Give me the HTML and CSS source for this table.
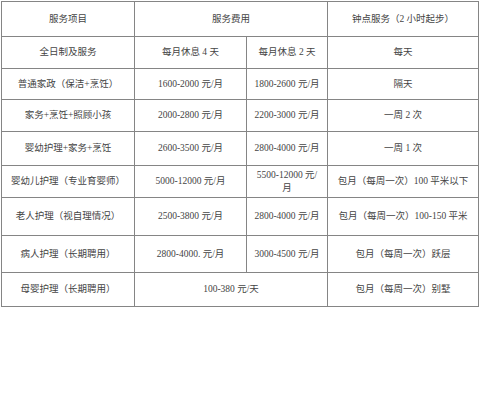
FILE: index.html
```html
<!DOCTYPE html>
<html lang="zh-CN">
<head>
<meta charset="utf-8">
<title>服务价格表</title>
<link rel="stylesheet" href="styles.css">
</head>
<body>
<table class="price-table">
  <colgroup>
    <col class="c1"><col class="c2"><col class="c3"><col class="c4">
  </colgroup>
  <tbody>
    <tr><td>服务项目</td><td colspan="2">服务费用</td><td>钟点服务（2 小时起步）</td></tr>
    <tr><td>全日制及服务</td><td>每月休息 4 天</td><td>每月休息 2 天</td><td>每天</td></tr>
    <tr><td>普通家政（保洁+烹饪）</td><td>1600-2000 元/月</td><td>1800-2600 元/月</td><td>隔天</td></tr>
    <tr><td>家务+烹饪+照顾小孩</td><td>2000-2800 元/月</td><td>2200-3000 元/月</td><td>一周 2 次</td></tr>
    <tr><td>婴幼护理+家务+烹饪</td><td>2600-3500 元/月</td><td>2800-4000 元/月</td><td>一周 1 次</td></tr>
    <tr><td>婴幼儿护理（专业育婴师）</td><td>5000-12000 元/月</td><td>5500-12000 元/<br>月</td><td>包月（每周一次）100 平米以下</td></tr>
    <tr><td>老人护理（视自理情况）</td><td>2500-3800 元/月</td><td>2800-4000 元/月</td><td>包月（每周一次）100-150 平米</td></tr>
    <tr><td>病人护理（长期聘用）</td><td>2800-4000. 元/月</td><td>3000-4500 元/月</td><td>包月（每周一次）跃层</td></tr>
    <tr><td>母婴护理（长期聘用）</td><td colspan="2">100-380 元/天</td><td>包月（每周一次）别墅</td></tr>
  </tbody>
</table>
</body>
</html>
```
FILE: styles.css
```css
html, body {
  margin: 0;
  padding: 0;
  background: #ffffff;
}
body {
  padding: 1px 0 0 1px;
  font-family: "Liberation Serif", "Noto Sans CJK SC", serif;
  font-size: 9.5px;
  color: #444444;
}
.price-table {
  border-collapse: collapse;
  table-layout: fixed;
  width: 477px;
}
.price-table .c1 { width: 133px; }
.price-table .c2 { width: 112px; }
.price-table .c3 { width: 81px; }
.price-table .c4 { width: 151px; }
.price-table td {
  border: 1px solid #858585;
  text-align: center;
  vertical-align: middle;
  padding: 0 4px;
  line-height: 13px;
}
.price-table tr:nth-child(1) { height: 35px; }
.price-table tr:nth-child(2) { height: 32px; }
.price-table tr:nth-child(3) { height: 31px; }
.price-table tr:nth-child(4) { height: 32px; }
.price-table tr:nth-child(5) { height: 34px; }
.price-table tr:nth-child(6) { height: 32px; }
.price-table tr:nth-child(7) { height: 38px; }
.price-table tr:nth-child(8) { height: 37px; }
.price-table tr:nth-child(9) { height: 34px; }
```
